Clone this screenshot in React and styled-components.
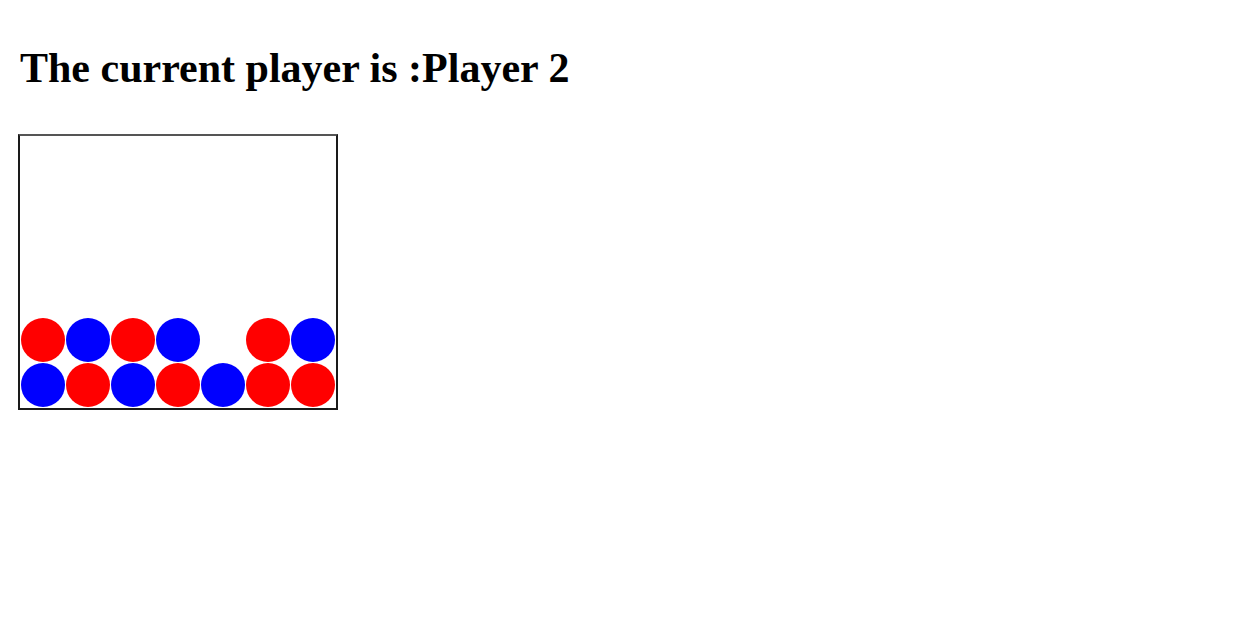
import React from "react";
import styled, { createGlobalStyle } from "styled-components";

const GlobalStyle = createGlobalStyle`
  body {
    margin: 0;
    background: #fff;
    font-family: "Liberation Serif", "Times New Roman", serif;
  }
`;

const board = [
  [0, 0, 0, 0, 0, 0, 0],
  [0, 0, 0, 0, 0, 0, 0],
  [0, 0, 0, 0, 0, 0, 0],
  [0, 0, 0, 0, 0, 0, 0],
  [1, 2, 1, 2, 0, 1, 2],
  [2, 1, 2, 1, 2, 1, 1],
];

function App() {
  return (
    <Page>
      <GlobalStyle />
      <Title>The current player is :Player 2</Title>
      <Board>
        {board.flat().map((cell, i) => (
          <Cell key={i}>{cell !== 0 && <Disc player={cell} />}</Cell>
        ))}
      </Board>
    </Page>
  );
}

const Page = styled.div`
  padding: 43px 18px;
`;

const Title = styled.h1`
  margin: 0 0 41px 2px;
  font-size: 42px;
  line-height: 50px;
  font-weight: bold;
  color: #000;
`;

const Board = styled.div`
  display: grid;
  grid-template-columns: repeat(7, 44px);
  grid-auto-rows: 44px;
  gap: 1px;
  width: 315px;
  padding: 2px 0 1px 1px;
  border: 2px solid #1a1a1a;
  border-top-color: #555;
`;

const Cell = styled.div`
  width: 44px;
  height: 44px;
`;

const Disc = styled.div`
  width: 100%;
  height: 100%;
  border-radius: 50%;
  background: ${(p) => (p.player === 1 ? "#ff0000" : "#0000ff")};
`;

export default App;
